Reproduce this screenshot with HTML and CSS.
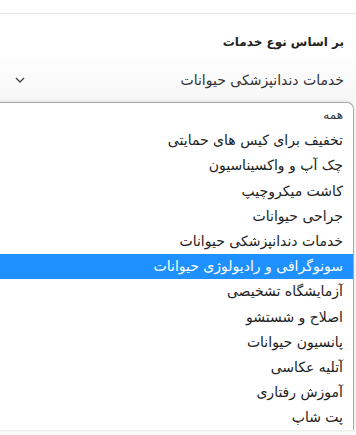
FILE: index.html
```html
<!DOCTYPE html>
<html lang="fa" dir="rtl">
<head>
<meta charset="utf-8">
<link rel="stylesheet" href="styles.css">
</head>
<body>
<div class="page">
  <div class="topbar"></div>
  <div class="filter">
    <div class="filter-title">بر اساس نوع خدمات</div>
    <div class="select">
      <span class="select-value">خدمات دندانپزشکی حیوانات</span>
      <svg class="chevron" width="10" height="6" viewBox="0 0 10 6"><path d="M1 1 L5 5 L9 1" fill="none" stroke="#444" stroke-width="1.3"/></svg>
    </div>
    <ul class="options">
      <li class="option">همه</li>
      <li class="option">تخفیف برای کیس های حمایتی</li>
      <li class="option">چک آپ و واکسیناسیون</li>
      <li class="option">کاشت میکروچیپ</li>
      <li class="option">جراحی حیوانات</li>
      <li class="option">خدمات دندانپزشکی حیوانات</li>
      <li class="option active">سونوگرافی و رادیولوژی حیوانات</li>
      <li class="option">آزمایشگاه تشخیصی</li>
      <li class="option">اصلاح و شستشو</li>
      <li class="option">پانسیون حیوانات</li>
      <li class="option">آتلیه عکاسی</li>
      <li class="option">آموزش رفتاری</li>
      <li class="option">پت شاپ</li>
    </ul>
  </div>
</div>
</body>
</html>
```
FILE: styles.css
```css
html, body {
  margin: 0;
  padding: 0;
  background: #fff;
  overflow: hidden;
}
.page {
  width: 356px;
  height: 435px;
  overflow: hidden;
  font-family: "DejaVu Sans", "Noto Sans", sans-serif;
  color: #222;
}
.topbar {
  height: 13px;
  border-bottom: 1px solid #e6e6e6;
}
.filter {
  display: flex;
  flex-direction: column;
}
.filter-title {
  height: 44px;
  box-sizing: border-box;
  padding: 19px 12px 0 0;
  font-size: 12px;
  font-weight: bold;
  line-height: 18px;
  color: #222;
}
.select {
  height: 44px;
  box-sizing: border-box;
  display: flex;
  align-items: center;
  justify-content: space-between;
  padding: 0 12px 0 15px;
  background: linear-gradient(#fdfdfd, #f7f7f7);
  font-size: 14px;
  color: #333;
}
.chevron {
  display: block;
}
.options {
  list-style: none;
  margin: 0 2px 0 -6px;
  padding: 0;
  border: 1px solid #a9a9a9;
  border-bottom: none;
  border-radius: 7px 7px 0 0;
  box-shadow: 0 0 4px rgba(0,0,0,0.15);
  background: #fff;
  overflow: hidden;
}
.option {
  height: 25.2px;
  line-height: 24px;
  padding-right: 10px;
  font-size: 14px;
  color: #222;
  white-space: nowrap;
}
.option:first-child {
  font-size: 12px;
  font-weight: normal;
  color: #333;
}
.option.active {
  background: #1e90ff;
  color: #fff;
}
```
